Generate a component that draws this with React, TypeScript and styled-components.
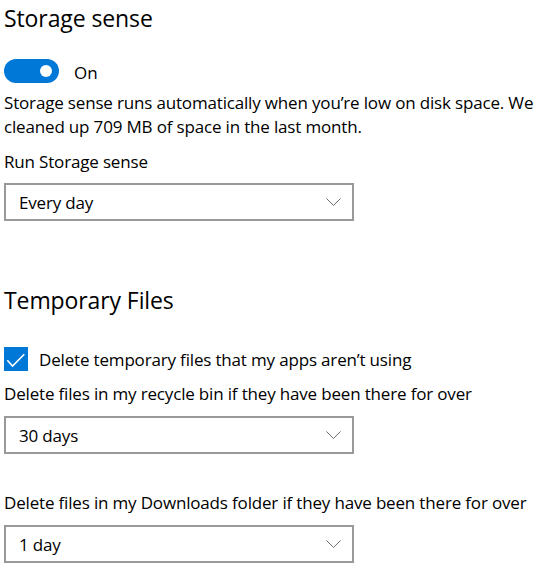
import React from "react";
import styled, { createGlobalStyle } from "styled-components";

const GlobalStyle = createGlobalStyle`
  html, body {
    margin: 0;
    padding: 0;
    background: #ffffff;
  }
  body {
    font-family: "Open Sans", "Noto Sans", sans-serif;
    color: #000000;
  }
`;

const Page = styled.div`
  display: flex;
  flex-direction: column;
  align-items: flex-start;
  padding: 2px 0 0 4px;
  width: 546px;
  box-sizing: border-box;
`;

const Title = styled.h2<{ $gapAfter: number; $gapBefore?: number }>`
  margin: ${(p) => p.$gapBefore ?? 0}px 0 ${(p) => p.$gapAfter}px 0;
  font-size: 23px;
  font-weight: 400;
  line-height: 32px;
  letter-spacing: -0.1px;
`;

const Text = styled.p<{ $gapAfter: number }>`
  margin: 0 0 ${(p) => p.$gapAfter}px 0;
  font-size: 17px;
  line-height: 24px;
  letter-spacing: -0.17px;
`;

const ToggleRow = styled.div`
  display: flex;
  align-items: center;
  gap: 15px;
  height: 24px;
  margin-bottom: 8px;
`;

const Toggle = styled.div`
  position: relative;
  width: 55px;
  height: 24px;
  border-radius: 12px;
  background: #0078d7;
`;

const Knob = styled.span`
  position: absolute;
  top: 6px;
  right: 7px;
  width: 12px;
  height: 12px;
  border-radius: 50%;
  background: #ffffff;
`;

const ToggleLabel = styled.span`
  font-size: 17px;
  line-height: 24px;
  padding-top: 3px;
`;

const Select = styled.div<{ $gapAfter: number }>`
  display: flex;
  align-items: center;
  justify-content: space-between;
  width: 350px;
  height: 38px;
  box-sizing: border-box;
  border: 2px solid #999999;
  padding: 0 11px 0 13px;
  margin-bottom: ${(p) => p.$gapAfter}px;
  font-size: 17px;
  letter-spacing: -0.17px;
  background: #ffffff;
`;

const Chevron = () => (
  <svg width="15" height="8" viewBox="0 0 15 8" fill="none">
    <polyline points="0.4,0.4 7.5,7.4 14.6,0.4" stroke="#6b6b6b" strokeWidth="1" />
  </svg>
);

const CheckRow = styled.div`
  display: flex;
  align-items: center;
  gap: 11px;
  height: 24px;
  margin-bottom: 11px;
  font-size: 17px;
  letter-spacing: -0.17px;
`;

const CheckBox = styled.span`
  display: flex;
  width: 24px;
  height: 24px;
  background: #0078d7;
`;

const Label = styled(Text)``;

export default function App() {
  return (
    <>
      <GlobalStyle />
      <Page>
        <Title $gapAfter={25}>Storage sense</Title>
        <ToggleRow>
          <Toggle>
            <Knob />
          </Toggle>
          <ToggleLabel>On</ToggleLabel>
        </ToggleRow>
        <Text $gapAfter={11}>
          Storage sense runs automatically when you’re low on disk space. We cleaned up 709 MB of space in the last month.
        </Text>
        <Label $gapAfter={9}>Run Storage sense</Label>
        <Select $gapAfter={0}>
          <span>Every day</span>
          <Chevron />
        </Select>

        <Title $gapBefore={63} $gapAfter={31}>Temporary Files</Title>
        <CheckRow>
          <CheckBox>
            <svg width="24" height="24" viewBox="0 0 24 24" fill="none">
              <polyline points="3.3,13.3 8.5,19 20.3,7.2" stroke="#ffffff" strokeWidth="1.6" />
            </svg>
          </CheckBox>
          <span>Delete temporary files that my apps aren’t using</span>
        </CheckRow>
        <Label $gapAfter={10}>Delete files in my recycle bin if they have been there for over</Label>
        <Select $gapAfter={37}>
          <span>30 days</span>
          <Chevron />
        </Select>
        <Label $gapAfter={10}>Delete files in my Downloads folder if they have been there for over</Label>
        <Select $gapAfter={0}>
          <span>1 day</span>
          <Chevron />
        </Select>
      </Page>
    </>
  );
}
